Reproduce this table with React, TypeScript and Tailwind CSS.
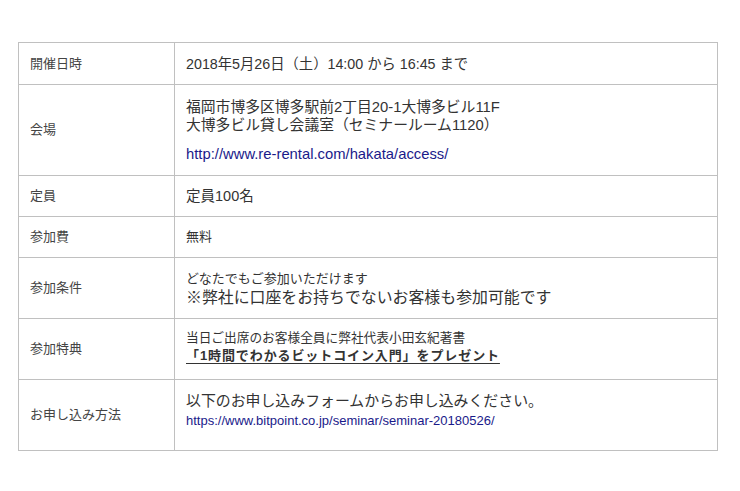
const font = { fontFamily: '"Liberation Sans", "Noto Sans CJK JP", sans-serif' };

type Row = {
  label: string;
  h: string;
  body: React.ReactNode;
  extra?: string;
};

const rows: Row[] = [
  {
    label: "開催日時",
    h: "h-[41px]",
    body: (
      <p className="text-[14.3px] leading-[18px]">
        2018年5月26日（土）14:00 から 16:45 まで
      </p>
    ),
  },
  {
    label: "会場",
    h: "h-[91px]",
    body: (
      <div>
        <p className="text-[14.8px] leading-[18px]">
          福岡市博多区博多駅前2丁目20-1大博多ビル11F
        </p>
        <p className="text-[14.8px] leading-[18px]">
          大博多ビル貸し会議室（セミナールーム1120）
        </p>
        <p className="mt-[11px] text-[14.8px] leading-[18px]">
          <a href="#" className="text-[#1a1a8a]">
            http://www.re-rental.com/hakata/access/
          </a>
        </p>
      </div>
    ),
  },
  {
    label: "定員",
    h: "h-[41px]",
    body: <p className="text-[14.5px] leading-[18px]">定員100名</p>,
  },
  {
    label: "参加費",
    h: "h-[41px]",
    body: <p className="text-[13px] leading-[18px]">無料</p>,
  },
  {
    label: "参加条件",
    h: "h-[61px]",
    body: (
      <div>
        <p className="text-[13px] leading-[19px]">どなたでもご参加いただけます</p>
        <p className="text-[15.9px] leading-[20px]">
          ※弊社に口座をお持ちでないお客様も参加可能です
        </p>
      </div>
    ),
  },
  {
    label: "参加特典",
    h: "h-[61px]",
    extra: "pb-[5px]",
    body: (
      <div>
        <p className="text-[12.7px] leading-[17px]">
          当日ご出席のお客様全員に弊社代表小田玄紀著書
        </p>
        <p className="text-[13px] leading-[17px] font-bold tracking-[0.9px] underline underline-offset-[3px]">
          「1時間でわかるビットコイン入門」をプレゼント
        </p>
      </div>
    ),
  },
  {
    label: "お申し込み方法",
    h: "h-[71px]",
    extra: "pb-[9px]",
    body: (
      <div>
        <p className="text-[14.9px] leading-[20px]">
          以下のお申し込みフォームからお申し込みください。
        </p>
        <p className="text-[13px] leading-[19px]">
          <a href="#" className="text-[#1a1a8a]">
            https://www.bitpoint.co.jp/seminar/seminar-20180526/
          </a>
        </p>
      </div>
    ),
  },
];

export default function App() {
  return (
    <div className="w-[740px] h-[491px] bg-white pt-[42px] pl-[18px]" style={font}>
      <div className="w-[700px] border border-[#c0c0c0] text-[#333]">
        {rows.map((r, i) => (
          <div
            key={r.label}
            className={`flex ${r.h} ${i > 0 ? "border-t border-[#c0c0c0]" : ""}`}
          >
            <div className="w-[156px] shrink-0 border-r border-[#c0c0c0] pl-[11px] flex items-center text-[13px] text-[#444]">
              {r.label}
            </div>
            <div className={`flex-1 pl-[11px] flex items-center ${r.extra ?? ""}`}>
              {r.body}
            </div>
          </div>
        ))}
      </div>
    </div>
  );
}
